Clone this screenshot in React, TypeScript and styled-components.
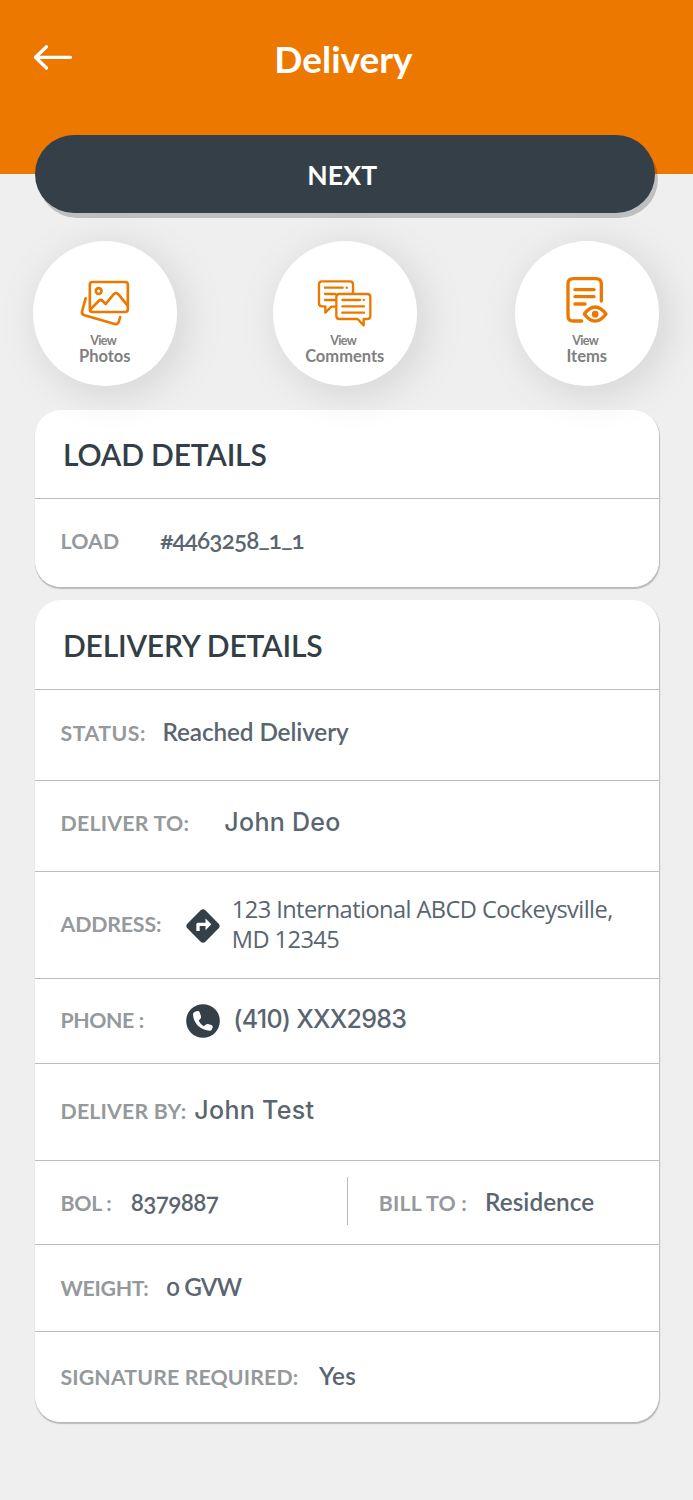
import React from "react";
import styled, { createGlobalStyle } from "styled-components";
import { MdDirections } from "react-icons/md";

const color = {
  orange: "#ed7800",
  slate: "#353f48",
  title: "#333e47",
  label: "#95999c",
  value: "#5a6570",
  caption: "#808080",
  line: "#b9bcc1",
  page: "#efefef",
};

const GlobalStyle = createGlobalStyle`
  *, *::before, *::after { box-sizing: border-box; }
  body { margin: 0; background: ${color.page}; font-family: Lato, sans-serif; }
`;

const Screen = styled.main`
  width: 693px;
  min-height: 1500px;
  background: ${color.page};
`;

const Header = styled.header`
  display: grid;
  grid-template-columns: 60px 1fr 60px;
  align-items: start;
  height: 174px;
  padding: 36px 21px 0 15px;
  background: ${color.orange};
`;

const BackButton = styled.button`
  display: flex;
  justify-content: flex-end;
  padding: 7px 2px 0 0;
  border: 0;
  background: none;
`;

const PageTitle = styled.h1`
  margin: 0;
  font-size: 37px;
  font-weight: 700;
  line-height: 46px;
  text-align: center;
  color: #fff;
`;

const NextButton = styled.button`
  position: relative;
  display: block;
  width: 619.5px;
  height: 78px;
  margin: -39px 0 0 35px;
  padding: 0 5px 0 0;
  border: 0;
  border-radius: 39px;
  background: ${color.slate};
  box-shadow: 3px 5px 0 rgba(0, 0, 0, 0.2);
  font: 700 26.5px/80px Lato, sans-serif;
  letter-spacing: 0.2px;
  color: #fff;
`;

const Actions = styled.nav`
  display: grid;
  grid-template-columns: 144.5px 144.5px 144.5px;
  column-gap: 95.5px;
  padding: 28px 0 0 32.5px;
`;

const ActionCircle = styled.button`
  display: flex;
  flex-direction: column;
  align-items: center;
  width: 144.5px;
  height: 144.5px;
  padding: 35px 0 0;
  border: 0;
  border-radius: 50%;
  background: #fff;
  box-shadow: 7px 7px 44px rgba(0, 0, 0, 0.12);
  font-family: Lato, sans-serif;
  font-weight: 700;
  color: ${color.caption};

  &:last-child { margin-left: 2px; }
`;

const ActionVerb = styled.span`
  margin: 6px 3px 0 0;
  font-size: 12.5px;
  line-height: 14px;
  letter-spacing: -0.6px;
`;

const ActionNoun = styled.span`
  margin-top: -1px;
  font-size: 16.5px;
  line-height: 19px;
`;

const Card = styled.section`
  width: 623.5px;
  margin: 0 0 0 35px;
  border-radius: 26px;
  background: rgba(255, 255, 255, 0.95);
  box-shadow: 0.5px 1.5px 1px #b9b9b9;
`;

const LoadCard = styled(Card)`
  height: 176.5px;
  margin-top: 24.5px;
`;

const DeliveryCard = styled(Card)`
  height: 822px;
  margin-top: 13.5px;
  padding-top: 1px;
`;

const CardTitle = styled.h2`
  height: 88px;
  margin: 0;
  padding: 24px 0 0 28px;
  font-size: 30px;
  font-weight: 600;
  line-height: 40px;
  letter-spacing: -0.2px;
  color: ${color.title};
`;

const Row = styled.div<{ $height: number; $top: number }>`
  display: flex;
  align-items: baseline;
  height: ${(p) => p.$height}px;
  padding: ${(p) => p.$top}px 0 0 25.5px;
  border-top: 1px solid ${color.line};
`;

const Label = styled.span<{ $track?: number }>`
  font-size: 21.3px;
  font-weight: 700;
  line-height: 30px;
  letter-spacing: ${(p) => p.$track ?? 0.13}px;
  white-space: nowrap;
  color: ${color.label};
`;

const Value = styled.span<{ $gap: number; $track?: number }>`
  margin-left: ${(p) => p.$gap}px;
  font-size: 24.3px;
  font-weight: 600;
  font-variant-numeric: oldstyle-nums;
  line-height: 30px;
  letter-spacing: ${(p) => p.$track ?? 0}px;
  white-space: nowrap;
  color: ${color.value};
`;

const RoundValue = styled(Value)`
  font-family: Inter, sans-serif;
  font-size: 25px;
  font-weight: 500;
  font-variant-numeric: normal;
`;

const Underscore = styled.span`
  vertical-align: 3px;
  line-height: 1;
`;

const AddressRow = styled(Row)`
  align-items: flex-start;
`;

const AddressText = styled.address`
  margin: -15px 0 0 9px;
  font: 400 23.6px/30px "Open Sans", sans-serif;
  letter-spacing: -0.56px;
  white-space: nowrap;
  color: ${color.value};
`;

const DirectionsBadge = styled.span`
  display: flex;
  margin: -3px 0 0 21.5px;
  color: ${color.slate};
`;

const PhoneBadge = styled.span`
  display: flex;
  align-self: flex-start;
  margin-left: 42px;
`;

const HalfCell = styled.div<{ $width: number }>`
  display: flex;
  align-items: baseline;
  width: ${(p) => p.$width}px;
`;

const CellDivider = styled.span`
  align-self: flex-start;
  width: 1px;
  height: 48px;
  margin: -10px 31px 0 0;
  background: ${color.line};
`;

const ArrowIcon = () => (
  <svg width="40" height="28" viewBox="0 0 40 28" fill="none" stroke="#fff" strokeWidth="3.3" strokeLinecap="round" strokeLinejoin="round">
    <path d="M37.500 14.300H3M13.500 3.800 2.500 14.300 13.500 25" />
  </svg>
);

const PhotosIcon = () => (
  <svg width="52" height="52" viewBox="177 139 156 156" fill="none" stroke={color.orange} strokeWidth="8" strokeLinecap="round" strokeLinejoin="round">
    <rect x="209.500" y="157" width="114" height="90" rx="8" />
    <circle cx="236" cy="184" r="8.500" />
    <path d="m211 240 25-26q6-6 12 0l9 9 23-28q8-9 16 0l27 33" />
    <path d="m197 206-10.500 38q-3 10 7 13l91 26q9 2 12-7l4-14" />
  </svg>
);

const CommentsIcon = () => (
  <svg width="56" height="52" viewBox="201 139 168 156" fill="none" stroke={color.orange} strokeWidth="7" strokeLinecap="round" strokeLinejoin="round">
    <path d="M309 190v-26q0-9-9-9h-84q-9 0-9 9v57q0 9 9 9h10v19l18-18h13" />
    <path d="M268 193h84q9 0 9 9v57q0 9-9 9h-11v19l-18-19h-55q-9 0-9-9v-57q0-9 9-9Z" />
    <path d="M225 174h53M290 174h.5M225 193h31M225 211h31M277 211h53M341 211h.5M277 230h65M277 249h65" />
  </svg>
);

const ItemsIcon = () => (
  <svg width="44" height="52" viewBox="225 139 132 156" fill="none" stroke={color.orange} strokeWidth="10" strokeLinecap="round" strokeLinejoin="round">
    <path d="M334 214v-51q0-16-16-16h-68q-16 0-16 16v95q0 16 16 16h25" />
    <path d="M255 180h57M255 201h57M255 223h30" />
    <path d="M283 253q32-42 65 0-33 43-65 0Z" />
    <circle cx="315.500" cy="253.500" r="10" fill={color.orange} stroke="none" />
  </svg>
);

const PhoneIcon = () => (
  <svg width="34" height="34" viewBox="499 401 102 102">
    <circle cx="550" cy="452" r="50.500" fill={color.slate} />
    <path fill="#fff" d="M526 424l7-2q5-1 7 4l4 12q1 4-2 7l-5 6q6 11 15 17l6-5q3-3 7-2l10 3q5 2 4 7l-2 6q-1 4-6 4-21-1-36-15-14-14-15-34 0-6 6-8Z" />
  </svg>
);

export default function App() {
  return (
    <Screen>
      <GlobalStyle />
      <Header>
        <BackButton aria-label="Back"><ArrowIcon /></BackButton>
        <PageTitle>Delivery</PageTitle>
      </Header>
      <NextButton>NEXT</NextButton>

      <Actions>
        <ActionCircle><PhotosIcon /><ActionVerb>View</ActionVerb><ActionNoun>Photos</ActionNoun></ActionCircle>
        <ActionCircle><CommentsIcon /><ActionVerb>View</ActionVerb><ActionNoun>Comments</ActionNoun></ActionCircle>
        <ActionCircle><ItemsIcon /><ActionVerb>View</ActionVerb><ActionNoun>Items</ActionNoun></ActionCircle>
      </Actions>

      <LoadCard>
        <CardTitle>LOAD DETAILS</CardTitle>
        <Row $height={88} $top={26}>
          <Label>LOAD</Label>
          <Value $gap={41} $track={-0.85}>#4463258<Underscore>_</Underscore>1<Underscore>_</Underscore>1</Value>
        </Row>
      </LoadCard>

      <DeliveryCard>
        <CardTitle>DELIVERY DETAILS</CardTitle>
        <Row $height={91} $top={27}>
          <Label $track={0.5}>STATUS:</Label>
          <Value $gap={16.5} $track={-0.1}>Reached Delivery</Value>
        </Row>
        <Row $height={91} $top={26}>
          <Label $track={0.25}>DELIVER TO:</Label>
          <RoundValue $gap={35} $track={0.3}>John Deo</RoundValue>
        </Row>
        <AddressRow $height={107} $top={37}>
          <Label $track={-0.15}>ADDRESS:</Label>
          <DirectionsBadge><MdDirections size={40} /></DirectionsBadge>
          <AddressText>123 International ABCD Cockeysville,<br />MD 12345</AddressText>
        </AddressRow>
        <Row $height={85} $top={25}>
          <Label $track={-0.4}>PHONE :</Label>
          <PhoneBadge><PhoneIcon /></PhoneBadge>
          <RoundValue $gap={13.5} $track={-0.75}>(410) XXX2983</RoundValue>
        </Row>
        <Row $height={97} $top={31}>
          <Label $track={0.2}>DELIVER BY:</Label>
          <RoundValue $gap={8} $track={0.3}>John Test</RoundValue>
        </Row>
        <Row $height={84} $top={25.5}>
          <HalfCell $width={286.5}>
            <Label $track={-0.3}>BOL :</Label>
            <Value $gap={19.5} $track={-0.65}>8379887</Value>
          </HalfCell>
          <CellDivider />
          <HalfCell $width={280}>
            <Label $track={0.2}>BILL TO :</Label>
            <Value $gap={18} $track={0.05}>Residence</Value>
          </HalfCell>
        </Row>
        <Row $height={87} $top={26.5}>
          <Label $track={-0.3}>WEIGHT:</Label>
          <Value $gap={18} $track={-0.7}>0 GVW</Value>
        </Row>
        <Row $height={91} $top={29}>
          <Label>SIGNATURE REQUIRED:</Label>
          <Value $gap={20.5} $track={0.4}>Yes</Value>
        </Row>
      </DeliveryCard>
    </Screen>
  );
}
